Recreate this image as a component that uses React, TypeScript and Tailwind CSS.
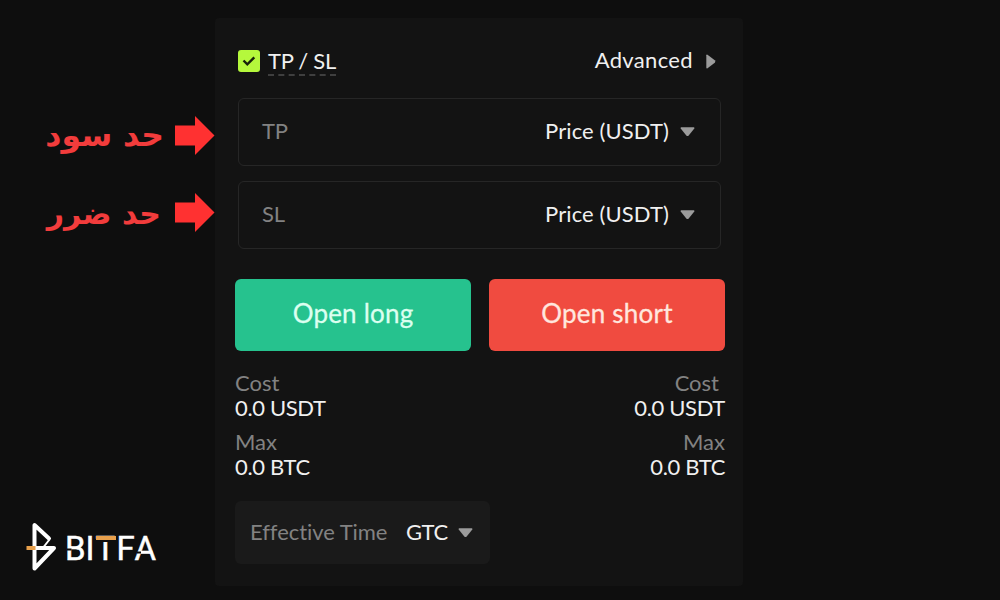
import { clsx } from 'clsx';

const hints = [
  { label: 'حد سود', className: 'pr-[11px] pb-[3px] text-[31.500px]' },
  { label: 'حد ضرر', className: 'pr-[14px] pt-px text-[30px]' },
];

const fields = ['TP', 'SL'];

const totals = [
  { label: 'Cost', value: '0.0 USDT' },
  { label: 'Max', value: '0.0 BTC' },
];

function CaretDown() {
  return (
    <svg className="h-[10px] w-[15px] shrink-0" viewBox="0 0 15 10" fill="#9b9b9b">
      <path d="M1.2 0.3h12.6q1 0.2 0.5 1.2L8.7 8.6q-1.2 1-2.4 0L0.7 1.5Q0.2 0.5 1.2 0.3Z" />
    </svg>
  );
}

function CaretRight() {
  return (
    <svg className="h-[15px] w-[10px] shrink-0" viewBox="0 0 10 15" fill="#9b9b9b">
      <path d="M0.3 1.2v12.6q0.2 1 1.2 0.5L8.8 8.7q1-1.2 0-2.4L1.5 0.7Q0.5 0.2 0.3 1.2Z" />
    </svg>
  );
}

function HintArrow() {
  return (
    <svg className="h-10 w-10 shrink-0" viewBox="0 0 40 40" fill="#ff3131">
      <path d="M0 9.5h20V0l19.500 19.500L20 39v-9.500H0Z" />
    </svg>
  );
}

function Logo() {
  return (
    <svg className="h-[50px] w-[134px]" viewBox="26 522 134 50" fill="none">
      <path
        d="M49 538.5 34.500 525V568.500L54 548H36"
        stroke="#fff"
        strokeWidth="4"
        strokeLinecap="round"
        strokeLinejoin="round"
      />
      <path d="m49.500 539.500-5.500 7" stroke="#fff" strokeWidth="2" />
      <path d="M26.500 548h9" stroke="#e8a04c" strokeWidth="4" />
      <g fill="#fff" fontFamily="Roboto, sans-serif" fontSize="33" stroke="#fff" strokeWidth="0.500">
        <text x="65" y="560">B</text>
        <text x="85.500" y="560">I</text>
        <text x="95.500" y="560">T</text>
        <text x="116.500" y="560">F</text>
        <text x="134.500" y="560">A</text>
      </g>
      {/* stencil cuts in the B, T and A */}
      <path d="M67 549.500h4.500M101 541h10M137 552.500h4" stroke="#0e0e0e" strokeWidth="2" />
      <path d="M96 538h20" stroke="#e8a04c" strokeWidth="4" />
    </svg>
  );
}

function PriceField({ name }: { name: string }) {
  return (
    <div className="flex h-[68px] items-center justify-between rounded-md border border-[#262626] pr-[25px] pl-[23px]">
      <span className="pb-1 tracking-[-0.3px] text-[#828282]">{name}</span>
      <span className="flex items-center gap-[11px]">
        <span className="pb-1 tracking-[0.1px]">Price (USDT)</span>
        <CaretDown />
      </span>
    </div>
  );
}

function Totals({ right = false }: { right?: boolean }) {
  return (
    <div className={clsx('flex flex-col gap-[9px] leading-[25px]', right && 'text-right')}>
      {totals.map((t) => (
        <div key={t.label}>
          <div className={clsx('text-[#828282]', right && t.label === 'Cost' && 'pr-[6px]')}>
            {t.label}
          </div>
          <div className="tracking-[-0.35px]">{t.value}</div>
        </div>
      ))}
    </div>
  );
}

export default function App() {
  return (
    <div className="flex h-[600px] w-[1000px] overflow-hidden bg-[#0e0e0e] font-[Lato,sans-serif] text-[22px] text-[#f0f0f0]">
      <aside className="flex w-[215px] flex-col justify-between pt-[116px] pb-[28px]">
        <div className="flex flex-col gap-[37px]">
          {hints.map((h) => (
            <div key={h.label} className="flex h-10 items-center justify-end">
              <span
                dir="rtl"
                className={clsx(
                  "font-['DejaVu_Sans',sans-serif] leading-9 font-bold whitespace-nowrap text-[#f23c3c]",
                  h.className
                )}
              >
                {h.label}
              </span>
              <HintArrow />
            </div>
          ))}
        </div>
        <div className="pl-[26px]">
          <Logo />
        </div>
      </aside>

      <main className="mt-[18px] h-[568px] w-[528px] rounded-sm bg-[#131313] pt-[30px] pr-[18px] pl-5">
        <div className="flex h-[28px] items-start justify-between pr-[9px] pl-[3px]">
          <div className="flex items-start gap-2">
            <span className="mt-[2px] flex size-[22px] items-center justify-center rounded-[3px] bg-[#b5f83c]">
              <svg className="size-[14px]" viewBox="0 0 14 14" fill="none" stroke="#17210a" strokeWidth="2.400">
                <path d="m1.500 6.500 3.800 3.800 7-7" />
              </svg>
            </span>
            <span className="border-b-2 border-dashed border-[#3f3f3f] leading-[26px] tracking-[-0.3px]">
              TP / SL
            </span>
          </div>
          <div className="flex h-[26px] items-center gap-[13px]">
            <span className="pb-[3px] tracking-[0.35px]">Advanced</span>
            <CaretRight />
          </div>
        </div>

        <div className="mt-[22px] flex flex-col gap-[15px] pr-[4px] pl-[3px]">
          {fields.map((name) => (
            <PriceField key={name} name={name} />
          ))}
        </div>

        <div className="mt-[30px] grid grid-cols-2 gap-[18px] text-[26px] tracking-[0.2px]">
          <button className="h-[72px] rounded-md bg-[#26c28e] pb-[3px] text-[#dcfff0] [-webkit-text-stroke:0.3px]">
            Open long
          </button>
          <button className="h-[72px] rounded-md bg-[#f04b40] pb-[3px] text-[#ffe6de] [-webkit-text-stroke:0.3px]">
            Open short
          </button>
        </div>

        <div className="mt-[19px] flex justify-between">
          <Totals />
          <Totals right />
        </div>

        <div className="mt-[22px] flex h-[63px] w-[255px] items-center rounded-md bg-[#1a1a1a] pl-[15px]">
          <span className="w-[138px] pb-[3px] tracking-[-0.05px] whitespace-nowrap text-[#828282] [font-variant-ligatures:none]">
            Effective Time
          </span>
          <span className="mr-[10px] ml-[18px] pb-[3px] tracking-[-0.4px]">GTC</span>
          <CaretDown />
        </div>
      </main>
    </div>
  );
}
